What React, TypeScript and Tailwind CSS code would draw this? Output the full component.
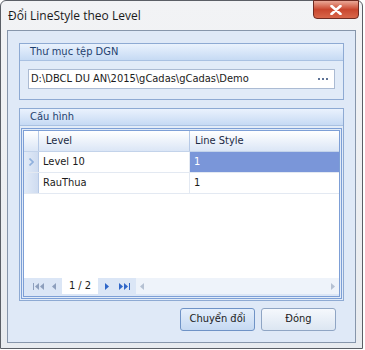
import React from "react";

const ui = { fontFamily: "Tahoma, 'DejaVu Sans Condensed', 'Liberation Sans', sans-serif" };
const title = { fontFamily: "'Segoe UI', 'Open Sans', 'Noto Sans', sans-serif" };

function GroupBox({ label, children, className }: { label: string; children: React.ReactNode; className?: string }) {
  return (
    <div className={"flex flex-col border border-[#8eaad3] bg-[#e1ebf8] " + (className ?? "")}>
      <div className="flex h-[17px] items-center border-b border-[#a9c1e2] bg-gradient-to-b from-[#eaf2fd] to-[#c6daf4] pl-[10px] text-[11px] text-[#1e3f6e]">
        {label}
      </div>
      {children}
    </div>
  );
}

function Tri({ dir, color }: { dir: "l" | "r"; color: string }) {
  return (
    <svg width="4" height="7" viewBox="0 0 4 7">
      <path d={dir === "l" ? "M4 0 L0 3.5 L4 7 Z" : "M0 0 L4 3.5 L0 7 Z"} fill={color} />
    </svg>
  );
}

function Pager() {
  const off = "#8d9fbd";
  const on = "#2f66c8";
  return (
    <div className="flex h-[16px] items-center bg-[#dbe6f6]">
      <div className="flex w-[38px] items-center justify-center gap-[1px] pl-[2px]">
        <span className="h-[7px] w-[1px] bg-[#8d9fbd]" />
        <Tri dir="l" color={off} />
        <Tri dir="l" color={off} />
        <span className="w-[6px]" />
        <Tri dir="l" color={off} />
      </div>
      <div className="flex h-full w-[36px] items-center justify-center bg-white text-[11px] text-[#1b1b1b]">1 / 2</div>
      <div className="flex w-[38px] items-center justify-center gap-[1px]">
        <Tri dir="r" color={on} />
        <span className="w-[8px]" />
        <Tri dir="r" color={on} />
        <Tri dir="r" color={on} />
        <span className="h-[7px] w-[1px] bg-[#2f66c8]" />
      </div>
      <div className="flex h-full flex-1 items-center justify-between bg-[#eef3fa] px-[4px]">
        <Tri dir="l" color="#b5c1d3" />
        <Tri dir="r" color="#b5c1d3" />
      </div>
    </div>
  );
}

function Grid() {
  const rows = [
    { level: "Level 10", style: "1", selected: true },
    { level: "RauThua", style: "1", selected: false },
  ];
  return (
    <div className="mx-[1px] mb-[1px] mt-[2px] flex flex-1 flex-col border border-[#7d9fd6] p-[1px]">
      <div className="flex flex-1 flex-col border border-[#7d9fd6] bg-white">
        <div className="flex h-[21px] border-b border-[#c3d3ea] bg-gradient-to-b from-[#ffffff] to-[#dbe6f6] text-[11px] text-[#1b2a44]">
          <div className="w-[15px] border-r border-[#b6c9e6]" />
          <div className="flex w-[151px] items-center border-r border-[#b6c9e6] pl-[7px]">Level</div>
          <div className="flex flex-1 items-center pl-[5px]">Line Style</div>
        </div>
        {rows.map((r) => (
          <div key={r.level} className="flex h-[21px] border-b border-[#e3e9f2] text-[11px] text-[#1b1b1b]">
            <div className="flex w-[15px] items-center justify-center border-r border-[#b6c9e6] bg-gradient-to-r from-[#e2ebf8] to-[#cfdcf0]">
              {r.selected && (
                <svg width="5" height="8" viewBox="0 0 5 8">
                  <path d="M0.5 0.5 L4 4 L0.5 7.5" fill="none" stroke="#8fb0dd" strokeWidth="1.6" />
                </svg>
              )}
            </div>
            <div className="flex w-[151px] items-center border-r border-[#e3e9f2] pl-[4px]">{r.level}</div>
            <div
              className={
                "flex flex-1 items-center pl-[4px] " + (r.selected ? "bg-[#7a96d9] text-white" : "")
              }
            >
              {r.style}
            </div>
          </div>
        ))}
        <div className="flex-1" />
        <Pager />
        <div className="h-[2px] bg-[#dbe6f6]" />
      </div>
    </div>
  );
}

function Button({ children, focused }: { children: React.ReactNode; focused?: boolean }) {
  return (
    <div
      className={
        "flex h-[23px] w-[75px] items-center justify-center rounded-[3px] border text-[11px] text-[#1b1b1b] " +
        (focused
          ? "border-[#6f93c6] bg-gradient-to-b from-[#e4eefb] to-[#c5d9f2]"
          : "border-[#8fa5c4] bg-gradient-to-b from-[#f5f8fc] to-[#dce6f2]")
      }
    >
      {children}
    </div>
  );
}

export default function App() {
  return (
    <div className="h-[350px] w-[365px] bg-white" style={ui}>
      <div className="flex h-[349px] w-[363px] flex-col rounded-t-[6px] border border-[#5b5f66] bg-gradient-to-b from-[#f2f3f5] to-[#e8ebef]">
        <div className="relative flex h-[29px] items-center pl-[7px] text-[12px] text-[#1a1a1a]" style={title}>
          Đổi LineStyle theo Level
          <div className="absolute right-[3px] top-[-1px] flex h-[19px] w-[46px] items-center justify-center rounded-b-[4px] border border-[#6e2b22] bg-gradient-to-b from-[#e9a796] via-[#c9462e] to-[#d8664a]">
            <svg width="12" height="10" viewBox="0 0 12 10">
              <path d="M1.5 1 L10.5 9 M10.5 1 L1.5 9" stroke="#ffffff" strokeWidth="2.6" strokeLinecap="round" />
            </svg>
          </div>
        </div>
        <div className="mx-[6px] flex h-[313px] flex-col border border-[#8796ab] bg-[#dfe9f7] px-[11px] pb-[11px] pt-[12px]">
          <GroupBox label="Thư mục tệp DGN" className="h-[57px]">
            <div className="px-[8px] pt-[8px]">
              <div className="flex h-[20px] items-center justify-between border border-[#abbbd3] bg-white pl-[2px] pr-[6px] text-[11px] text-[#1b1b1b]">
                <span>D:\DBCL DU AN\2015\gCadas\gCadas\Demo</span>
                <span className="flex gap-[2px]">
                  <span className="h-[2px] w-[2px] bg-[#5f7396]" />
                  <span className="h-[2px] w-[2px] bg-[#5f7396]" />
                  <span className="h-[2px] w-[2px] bg-[#5f7396]" />
                </span>
              </div>
            </div>
          </GroupBox>
          <GroupBox label="Cấu hình" className="mt-[8px] h-[194px]">
            <Grid />
          </GroupBox>
          <div className="mt-[7px] flex justify-end gap-[6px] pr-[8px]">
            <Button focused>Chuyển đổi</Button>
            <Button>Đóng</Button>
          </div>
        </div>
      </div>
    </div>
  );
}
